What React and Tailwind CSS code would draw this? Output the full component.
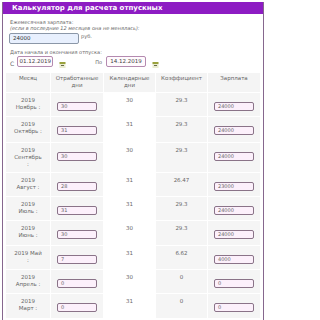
import React from 'react';

const rows = [
  { m: ['2019', 'Ноябрь :'], w: '30', c: '30', k: '29.3', s: '24000', h: 'h-[23px]' },
  { m: ['2019', 'Октябрь :'], w: '31', c: '31', k: '29.3', s: '24000', h: 'h-[25px]' },
  { m: ['2019', 'Сентябрь', ':'], w: '30', c: '30', k: '29.3', s: '24000', h: 'h-[29px]' },
  { m: ['2019', 'Август :'], w: '28', c: '31', k: '26.47', s: '23000', h: 'h-[23px]' },
  { m: ['2019', 'Июль :'], w: '31', c: '31', k: '29.3', s: '24000', h: 'h-[23px]' },
  { m: ['2019', 'Июнь :'], w: '30', c: '30', k: '29.3', s: '24000', h: 'h-[24px]' },
  { m: ['2019 Май', ':'], w: '7', c: '31', k: '6.62', s: '4000', h: 'h-[23px]' },
  { m: ['2019', 'Апрель :'], w: '0', c: '30', k: '0', s: '0', h: 'h-[23px]' },
  { m: ['2019', 'Март :'], w: '0', c: '31', k: '0', s: '0', h: 'h-[24px]' },
];

function CalIcon() {
  return (
    <svg width="7" height="6" viewBox="0 0 7 6" className="mt-[6px] ml-[6px]">
      <rect x="0.5" y="0" width="6" height="2" fill="#9aa23c" />
      <rect x="0.5" y="2" width="6" height="4" fill="#e9ecd0" />
      <rect x="2" y="3" width="3" height="1" fill="#6b6b4a" />
    </svg>
  );
}

function Field({ value }) {
  return (
    <div className="mx-auto mt-[5px] flex h-[9px] w-[40px] items-center rounded-[2px] border border-[#8a7388] bg-[#fcf0fb] pl-[3px] text-[5px] text-[#666]">
      {value}
    </div>
  );
}

export default function App() {
  return (
    <div className="h-[320px] w-[266px] overflow-hidden bg-white font-['DejaVu_Sans',sans-serif] text-[#666]">
      <div className="ml-[2px] mt-[2px] h-[330px] w-[262px] border-x border-[#86678e]">
        <div className="flex h-[12px] items-center bg-[#8d1cc3] pl-[9px] text-[7px] font-bold text-white">
          Калькулятор для расчета отпускных
        </div>

        <div className="px-[7px]">
          <div className="mt-[5px] text-[5px] leading-[6px]">Ежемесячная зарплата:</div>
          <div className="text-[5px] italic leading-[6px]">(если в последние 12 месяцев она не менялась):</div>
          <div className="mt-[2px] flex items-start">
            <div className="-ml-[1px] flex h-[11px] w-[70px] items-center rounded-[2px] border border-[#8b97a8] bg-[#e8f0fe] pl-[3px] text-[5.5px] text-[#333]">
              24000
            </div>
            <span className="ml-[2px] text-[5px]">руб.</span>
          </div>

          <div className="mt-[5px] text-[5px] leading-[6px]">Дата начала и окончания отпуска:</div>
          <div className="mt-[1px] flex items-start">
            <span className="mt-[3px] text-[6px]">С</span>
            <div className="ml-[3px] flex h-[11px] w-[36px] items-center justify-center rounded-[2px] border border-[#b48ab0] bg-[#fffafd] text-[5.5px] text-[#444]">
              01.12.2019
            </div>
            <CalIcon />
            <span className="ml-[29px] mt-[3px] text-[5px]">По</span>
            <div className="ml-[4px] flex h-[11px] w-[40px] items-center justify-center rounded-[2px] border border-[#b48ab0] bg-[#fffafd] text-[5.5px] text-[#444]">
              14.12.2019
            </div>
            <CalIcon />
          </div>

          <div className="-ml-[4px] mt-[5px] grid w-[250px] grid-cols-[44px_52px_51px_51px_52px] gap-px bg-white text-center text-[5.5px] leading-[7px]">
            <div className="h-[19px] bg-[#f4f4f4] pt-[2px]">Месяц</div>
            <div className="h-[19px] bg-[#f4f4f4] pt-[2px]">Отработанные<br />дни</div>
            <div className="h-[19px] bg-[#f4f4f4] pt-[2px]">Календарные<br />дни</div>
            <div className="h-[19px] bg-[#f4f4f4] pt-[2px]">Коэффициент</div>
            <div className="h-[19px] bg-[#f4f4f4] pt-[2px]">Зарплата</div>
            {rows.map((r, i) => (
              <React.Fragment key={i}>
                <div className={`${r.h} bg-[#f5f5f5] pt-[4px] leading-[7px]`}>
                  {r.m.map((t, j) => (
                    <div key={j}>{t}</div>
                  ))}
                </div>
                <div className={`${r.h} bg-[#f5f5f5] pt-[4px]`}>
                  <Field value={r.w} />
                </div>
                <div className={`${r.h} bg-white pt-[4px]`}>{r.c}</div>
                <div className={`${r.h} bg-[#f5f5f5] pt-[4px]`}>{r.k}</div>
                <div className={`${r.h} bg-[#f5f5f5] pt-[4px]`}>
                  <Field value={r.s} />
                </div>
              </React.Fragment>
            ))}
          </div>
        </div>
      </div>
    </div>
  );
}
